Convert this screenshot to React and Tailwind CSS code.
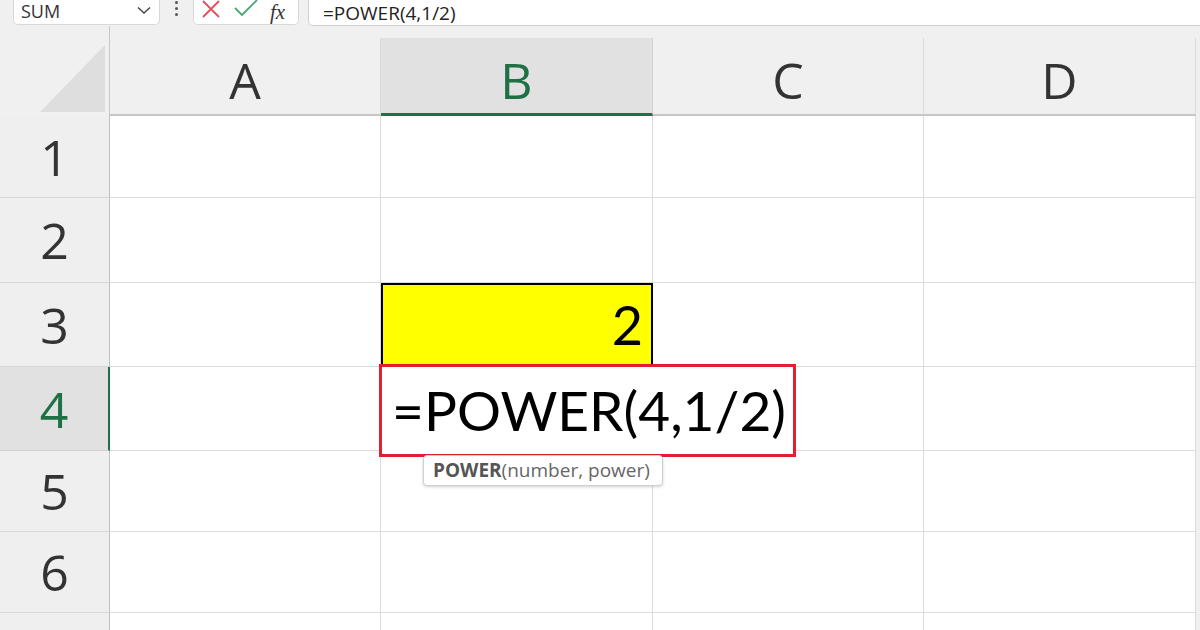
import React from "react";

const cols = ["A", "B", "C", "D"];
const colW = [271, 272, 271, 272];
const rowH = [82, 85, 84, 84, 81, 81, 30];

export default function App() {
  return (
    <div className="w-[1200px] h-[630px] overflow-hidden bg-[#f0f0f0] relative" style={{ fontFamily: "'Open Sans', sans-serif" }}>
      {/* formula bar */}
      <div className="h-[26px] flex items-stretch relative">
        <div className="ml-[13px] w-[147px] h-[25px] bg-white border border-t-0 border-[#d9d9d9] rounded-b-[5px] flex items-center justify-between pl-[7px] pr-[8px]">
          <span className="text-[18px] text-[#333] leading-none mt-[-2px]">SUM</span>
          <svg width="14" height="9" viewBox="0 0 14 9" className="mt-[-4px]">
            <path d="M1 1.5 L7 7 L13 1.5" fill="none" stroke="#444" strokeWidth="1.4" />
          </svg>
        </div>
        <div className="w-[33px] flex flex-col items-center justify-start gap-[3px] pt-[1px]">
          <div className="w-[3px] h-[3px] rounded-full bg-[#555]" />
          <div className="w-[3px] h-[3px] rounded-full bg-[#555]" />
          <div className="w-[3px] h-[3px] rounded-full bg-[#555]" />
        </div>
        <div className="w-[106px] h-[25px] bg-white border border-t-0 border-[#d9d9d9] rounded-b-[5px] flex items-center">
          <svg width="20" height="20" viewBox="0 0 20 20" className="ml-[7px] mt-[-6px]">
            <path d="M2 2 L18 18 M18 2 L2 18" stroke="#e64c5c" strokeWidth="1.8" fill="none" />
          </svg>
          <svg width="26" height="20" viewBox="0 0 26 20" className="ml-[12px] mt-[-6px]">
            <path d="M2 9 L9 16 L24 1" stroke="#4aa874" strokeWidth="1.8" fill="none" />
          </svg>
          <span className="ml-[11px] mt-[1px] text-[21px] italic text-[#333] leading-none" style={{ fontFamily: "'Liberation Serif', serif" }}>fx</span>
        </div>
        <div className="ml-[9px] flex-1 h-[26px] bg-white border-b border-l border-[#d0d0d0] rounded-bl-[5px] flex items-center pl-[14px]">
          <span className="text-[19px] text-[#222] leading-none mt-[1px]">=POWER(4,1/2)</span>
        </div>
      </div>

      {/* column header */}
      <div className="flex h-[90px]">
        <div className="w-[110px] h-full relative border-r border-[#c8c8c8] flex items-end">
          <svg width="110" height="90" viewBox="0 0 110 90" className="absolute left-0 top-0">
            <path d="M105 19 L105 86 L40 86 Z" fill="#dedede" />
          </svg>
        </div>
        {cols.map((c, i) => {
          const sel = c === "B";
          return (
            <div
              key={c}
              className={
                sel
                  ? "mt-[12px] pt-[8px] bg-[#e1e1e1] border-b-[3px] border-[#1e7145] border-r border-r-[#d0d0d0] flex items-center justify-center"
                  : "mt-[12px] pt-[8px] border-b-2 border-[#c6c6c6] border-r border-r-[#dadada] flex items-center justify-center"
              }
              style={{ width: colW[i] }}
            >
              <span className={sel ? "text-[50px] text-[#1e7145] leading-none" : "text-[50px] text-[#333] leading-none"}>{c}</span>
            </div>
          );
        })}
      </div>

      {/* rows */}
      {rowH.map((h, r) => {
        const sel = r === 3;
        return (
          <div key={r} className="flex" style={{ height: h }}>
            <div
              className={
                sel
                  ? "w-[110px] bg-[#e1e1e1] border-r-2 border-r-[#1e7145] border-b border-b-[#d0d0d0] flex items-center justify-center"
                  : "w-[110px] bg-[#efefef] border-r border-r-[#c0c0c0] border-b border-b-[#d8d8d8] flex items-center justify-center"
              }
            >
              {r < 6 && (
                <span className={sel ? "text-[50px] text-[#1e7145] leading-none" : "text-[50px] text-[#333] leading-none"}>{r + 1}</span>
              )}
            </div>
            {cols.map((c, i) => {
              const yellow = r === 2 && c === "B";
              return (
                <div
                  key={c}
                  className={
                    yellow
                      ? "bg-[#ffff00] border-2 border-black flex items-center justify-end pr-[8px]"
                      : "bg-white border-r border-b border-[#dcdcdc]"
                  }
                  style={{ width: colW[i] }}
                >
                  {yellow && (
                    <span className="text-[54px] text-black leading-none" style={{ fontFamily: "Lato, sans-serif" }}>2</span>
                  )}
                </div>
              );
            })}
          </div>
        );
      })}

      {/* editing cell overlay */}
      <div className="absolute left-[379px] top-[364px] w-[417px] h-[93px] bg-white border-[3px] border-[#e0202e] flex items-center pl-[10px]">
        <span className="text-[55px] text-black leading-none" style={{ fontFamily: "Lato, sans-serif" }}>=POWER(4,1/2)</span>
      </div>

      {/* tooltip */}
      <div className="absolute left-[423px] top-[455px] h-[31px] bg-white border border-[#cfcfcf] rounded-[4px] shadow-[0_1px_3px_rgba(0,0,0,0.18)] flex items-center pl-[9px] pr-[12px]">
        <span className="text-[19px] text-[#666] leading-none"><span className="font-bold text-[#555]">POWER</span>(number, power)</span>
      </div>
    </div>
  );
}
